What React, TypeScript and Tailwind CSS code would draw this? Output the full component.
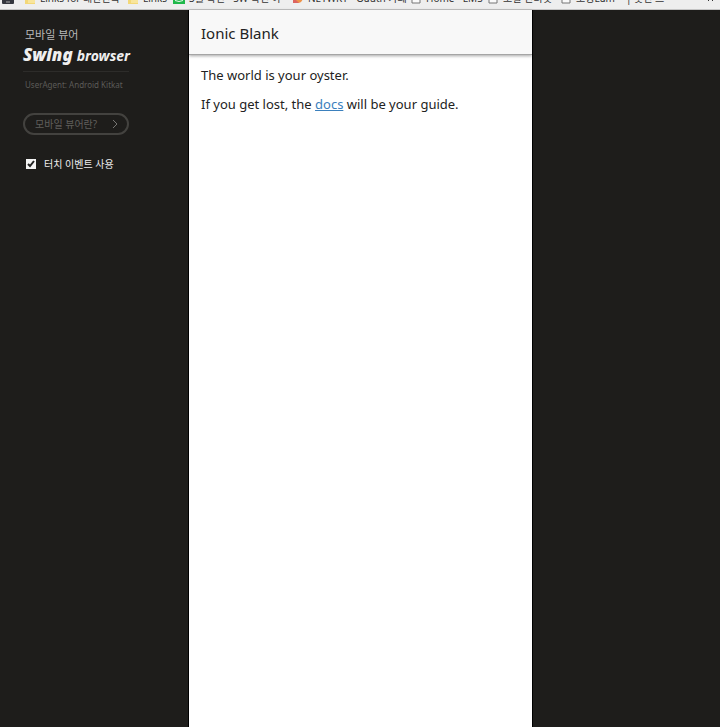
import React from 'react'

interface Bookmark {
  label: string
  icon: 'folder' | 'naver' | 'orange' | 'page' | 'none'
  width: string
}

const bookmarks: Bookmark[] = [
  { label: 'Links for 대한민국', icon: 'folder', width: 'w-[103px]' },
  { label: 'Links', icon: 'folder', width: 'w-[46px]' },
  { label: '3월 확인 - SW 확인 아', icon: 'naver', width: 'w-[119px]' },
  { label: 'NETWKY - Oauth 카페', icon: 'orange', width: 'w-[118px]' },
  { label: 'Home - LMS', icon: 'page', width: 'w-[77px]' },
  { label: '모빌 인터넷', icon: 'page', width: 'w-[73px]' },
  { label: '모빙Eam', icon: 'page', width: 'w-[66px]' },
  { label: '| 웃긴 프', icon: 'none', width: 'w-[68px]' }
]

const BookmarkIcon: React.FC<{ icon: Bookmark['icon'] }> = ({ icon }) => {
  switch (icon) {
    case 'folder':
      return (
        <svg className="h-3 w-3 shrink-0" viewBox="0 0 12 12">
          <path d="M1 0h4l1 2h5v10H1z" fill="#f3d878" />
          <path d="M4 5h7v6H4z" fill="#f8e59c" />
        </svg>
      )
    case 'naver':
      return (
        <svg className="h-3 w-3 shrink-0" viewBox="0 0 12 12">
          <path d="M0 0h12v12H0z" fill="#1fb84a" />
          <path d="M2 8l4 1 4-1v1l-4 1-4-1z" fill="#e9fbed" />
        </svg>
      )
    case 'orange':
      return (
        <svg className="h-3 w-3 shrink-0" viewBox="0 0 12 12">
          <path d="M1 0h10v6q-1 5-5 5H1z" fill="#ee9348" />
          <path d="M1 5l6 6H1z" fill="#dc6460" />
        </svg>
      )
    case 'page':
      return (
        <svg className="h-3 w-3 shrink-0" viewBox="0 0 12 12">
          <path d="M2 1h5l3 3v7H2z" fill="#fafafa" stroke="#777" />
        </svg>
      )
    default:
      return null
  }
}

const BookmarkBar: React.FC = () => (
  <nav
    aria-label="Bookmarks"
    className="flex h-[10px] items-end overflow-hidden border-b border-[#c4c4c4] bg-[#eeeeee] pb-[5px] text-[10px] leading-3 text-[#333]"
  >
    <svg className="mr-[10px] ml-[2px] h-3 w-3 shrink-0" viewBox="0 0 12 12">
      <rect width="12" height="12" rx="1" fill="#34363e" />
      <path d="M4 10h4" stroke="#aaa" />
    </svg>
    {bookmarks.map((bookmark) => (
      <a
        key={bookmark.label}
        href="#"
        className={`flex shrink-0 items-end gap-1 whitespace-nowrap ${bookmark.width}`}
      >
        <BookmarkIcon icon={bookmark.icon} />
        <span>{bookmark.label}</span>
      </a>
    ))}
    <button type="button" aria-label="More bookmarks" className="ml-auto mr-1 flex shrink-0">
      <svg className="h-3 w-2" viewBox="0 0 8 12" fill="none" stroke="#333">
        <path d="M0 5l2 2-2 2M4 5l2 2-2 2" />
      </svg>
    </button>
  </nav>
)

const Sidebar: React.FC = () => (
  <aside className="border-r border-black pl-[23px] pt-4 text-[#b9b9b9]">
    <div className="w-[106px]">
      <p className="pl-[2px] text-[11px] leading-[18px]">모바일 뷰어</p>
      <h1 className="flex items-baseline gap-1 whitespace-nowrap italic leading-[22px] text-[#efefef]">
        <span className="text-[17px] font-black">Swing</span>
        <span className="text-[14px] font-bold">browser</span>
      </h1>
      <p className="mt-1 whitespace-nowrap border-t border-[#2d2c2a] pl-[2px] pt-[5px] text-[8px] leading-4 text-[#5c5b58]">
        UserAgent: Android Kitkat
      </p>
      <button
        type="button"
        className="mt-5 flex h-[22px] w-full items-center justify-between rounded-full border-2 border-[#43423f] pl-[10px] pr-2 text-[10px] text-[#605f5c]"
      >
        모바일 뷰어란?
        <svg className="h-2 w-2" viewBox="0 0 8 8" fill="none" stroke="#777673">
          <path d="M2 0l4 4-4 4" />
        </svg>
      </button>
      <label className="mt-5 flex items-center gap-2 whitespace-nowrap pl-[3px] text-[10px] leading-[18px] text-[#ededed]">
        <span className="grid h-[10px] w-[10px] place-items-center">
          <input
            type="checkbox"
            defaultChecked
            className="peer col-start-1 row-start-1 h-[10px] w-[10px] appearance-none bg-[#f4f4f4]"
          />
          <svg
            className="pointer-events-none invisible col-start-1 row-start-1 h-[10px] w-[10px] peer-checked:visible"
            viewBox="0 0 10 10"
            fill="none"
            stroke="#222"
            strokeWidth="2"
          >
            <path d="M2 5l2 2 4-5" />
          </svg>
        </span>
        터치 이벤트 사용
      </label>
    </div>
  </aside>
)

const App: React.FC = () => (
  <div className="flex min-h-screen flex-col bg-[#1e1d1b] font-['Noto_Sans','Noto_Sans_CJK_KR',sans-serif]">
    <BookmarkBar />
    <div className="grid flex-1 grid-cols-[189px_1fr_188px]">
      <Sidebar />
      <main className="bg-white text-[#222]">
        <header className="flex h-[45px] items-center border-b border-[#a5a5a5] bg-[#f8f8f8] px-3 pt-[2px] shadow-[0_1px_3px_rgba(0,0,0,0.35)]">
          <h2 className="text-[15px]">Ionic Blank</h2>
        </header>
        <div className="space-y-[10px] px-3 pt-[11px] text-[13px] leading-[19px]">
          <p>The world is your oyster.</p>
          <p>
            If you get lost, the{' '}
            <a href="#" className="text-[#3b80bd] underline">
              docs
            </a>{' '}
            will be your guide.
          </p>
        </div>
      </main>
      <div className="border-l border-black" />
    </div>
  </div>
)

export default App
